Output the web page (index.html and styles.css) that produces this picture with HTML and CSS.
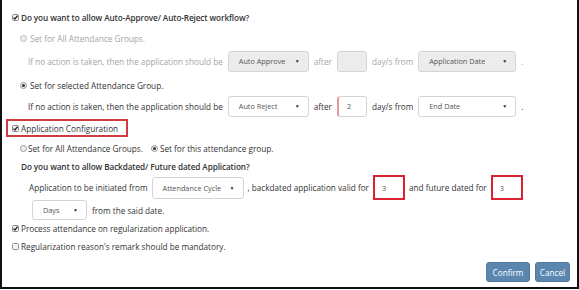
FILE: index.html
```html
<!DOCTYPE html>
<html lang="en">
<head>
  <meta charset="UTF-8" />
  <title>Regularization Settings</title>
  <link rel="stylesheet" href="styles.css">
</head>
<body>
  <div class="panel">

    <div class="row r1">
      <svg class="chk" viewBox="0 0 7 7" width="7" height="7"><rect x=".5" y=".5" width="6" height="6" rx="1" fill="#f2f2f2" stroke="#8c8c8c"/><path d="M1.5 3.6 L2.9 5 L5.6 1.6" fill="none" stroke="#222" stroke-width="1.3"/></svg>
      <span class="strong">Do you want to allow Auto-Approve/ Auto-Reject workflow?</span>
    </div>

    <div class="row r2 lvl1 muted">
      <svg class="radio" viewBox="0 0 7 7" width="7" height="7"><circle cx="3.5" cy="3.5" r="3" fill="#eee" stroke="#bbb"/></svg>
      <span>Set for All Attendance Groups.</span>
    </div>

    <div class="row r3 lvl2 muted line">
      <span>If no action is taken, then the application should be</span>
      <span class="select disabled w-rule"><span>Auto Approve</span><span class="arrow">▼</span></span>
      <span>after</span>
      <span class="num disabled"></span>
      <span>day/s from</span>
      <span class="select disabled w-from"><span>Application Date</span><span class="arrow">▼</span></span>
      <span>.</span>
    </div>

    <div class="row r4 lvl1">
      <svg class="radio" viewBox="0 0 7 7" width="7" height="7"><circle cx="3.5" cy="3.5" r="3" fill="#eee" stroke="#999"/><circle cx="3.5" cy="3.5" r="1.5" fill="#333"/></svg>
      <span>Set for selected Attendance Group.</span>
    </div>

    <div class="row r5 lvl2 line">
      <span>If no action is taken, then the application should be</span>
      <span class="select w-rule"><span>Auto Reject</span><span class="arrow">▼</span></span>
      <span>after</span>
      <span class="num invalid">2</span>
      <span>day/s from</span>
      <span class="select w-from"><span>End Date</span><span class="arrow">▼</span></span>
      <span>.</span>
    </div>

    <div class="row r6">
      <div class="mark">
        <svg class="chk" viewBox="0 0 7 7" width="7" height="7"><rect x=".5" y=".5" width="6" height="6" rx="1" fill="#f2f2f2" stroke="#8c8c8c"/><path d="M1.5 3.6 L2.9 5 L5.6 1.6" fill="none" stroke="#222" stroke-width="1.3"/></svg>
        <span>Application Configuration</span>
      </div>
    </div>

    <div class="row r7 lvl1">
      <svg class="radio" viewBox="0 0 7 7" width="7" height="7"><circle cx="3.5" cy="3.5" r="3" fill="#eee" stroke="#999"/></svg>
      <span>Set for All Attendance Groups.</span>
      <svg class="radio second" viewBox="0 0 7 7" width="7" height="7"><circle cx="3.5" cy="3.5" r="3" fill="#eee" stroke="#999"/><circle cx="3.5" cy="3.5" r="1.5" fill="#333"/></svg>
      <span>Set for this attendance group.</span>
    </div>

    <div class="row r8 lvl1">
      <span class="strong">Do you want to allow Backdated/ Future dated Application?</span>
    </div>

    <div class="row r9 lvl2b line">
      <span>Application to be initiated from</span>
      <span class="select w-cycle"><span>Attendance Cycle</span><span class="arrow">▼</span></span>
      <span>, backdated application valid for</span>
      <span class="num flagged">3</span>
      <span>and future dated for</span>
      <span class="num flagged">3</span>
    </div>

    <div class="row r10 line">
      <span class="select w-days"><span>Days</span><span class="arrow">▼</span></span>
      <span>from the said date.</span>
    </div>

    <div class="row r11">
      <svg class="chk" viewBox="0 0 7 7" width="7" height="7"><rect x=".5" y=".5" width="6" height="6" rx="1" fill="#f2f2f2" stroke="#8c8c8c"/><path d="M1.5 3.6 L2.9 5 L5.6 1.6" fill="none" stroke="#222" stroke-width="1.3"/></svg>
      <span>Process attendance on regularization application.</span>
    </div>

    <div class="row r12">
      <svg class="chk" viewBox="0 0 7 7" width="7" height="7"><rect x=".5" y=".5" width="6" height="6" rx="1" fill="#f2f2f2" stroke="#8c8c8c"/></svg>
      <span>Regularization reason's remark should be mandatory.</span>
    </div>

    <div class="actions">
      <button class="btn confirm">Confirm</button>
      <button class="btn cancel">Cancel</button>
    </div>

  </div>
</body>
</html>
```

FILE: styles.css
```css
body {
  margin: 0;
  font-family: "Open Sans", sans-serif;
  font-size: 8.2px;
  color: #333;
  background: #fff;
}
.panel {
  height: 289px;
  box-sizing: border-box;
  border: 2px solid #111;
  border-top: none;
  padding: 0 7px 0 10px;
  display: flex;
  flex-direction: column;
}
.row {
  display: flex;
  align-items: center;
  white-space: nowrap;
  height: 12px;
}
.line {
  gap: 5px;
}
.strong {
  font-weight: 600;
  letter-spacing: -0.1px;
}
.muted {
  color: #a5a5a5;
}
.chk {
  margin-right: 2px;
  flex: none;
}
.radio {
  margin-right: 3px;
  flex: none;
}
.radio.second {
  margin-left: 8px;
  margin-right: 2px;
}
.lvl1 {
  padding-left: 8px;
}
.lvl2 {
  padding-left: 16px;
}
.lvl2b {
  padding-left: 17px;
}

/* row spacing */
.r1 { margin-top: 11px; }
.r2 { margin-top: 9px; }
.r3 { margin-top: 6px; height: 22px; }
.r4 { margin-top: 7px; }
.r5 { margin-top: 4px; height: 22px; }
.r6 { margin-top: 2px; height: 18px; }
.r7 { margin-top: 5px; }
.r7 .radio:first-child { margin-right: 1px; }
.r8 { margin-top: 6px; padding-left: 9px; }
.r9 { margin-top: 3px; height: 25px; gap: 4px; }
.r10 { margin-top: 0; height: 20px; padding-left: 20px; }
.r11 { margin-top: 2px; }
.r12 { margin-top: 6px; }

.mark {
  display: flex;
  align-items: center;
  height: 18px;
  box-sizing: border-box;
  border: 2px solid #d13a3f;
  margin-left: -6px;
  padding: 0 8px 0 4px;
}

.select {
  display: flex;
  align-items: center;
  justify-content: space-between;
  box-sizing: border-box;
  height: 21px;
  padding: 0 8px 0 10px;
  border: 1px solid #d4d4d4;
  border-radius: 3px;
  background: #fff;
  color: #555;
  font-size: 7.3px;
}
.select.disabled {
  background: #ececec;
}
.arrow {
  font-size: 5px;
  color: #333;
}
.w-rule { width: 81px; }
.w-from { width: 98px; }
.w-cycle { width: 92px; height: 22px; }
.w-days { width: 55px; height: 20px; }

.num {
  box-sizing: border-box;
  width: 30px;
  height: 21px;
  border: 1px solid #d4d4d4;
  border-radius: 3px;
  background: #fff;
  color: #555;
  font-size: 7.3px;
  display: flex;
  align-items: center;
  padding-left: 8px;
}
.num.disabled {
  background: #ececec;
}
.num.invalid {
  border-left: 2px solid #e69a9a;
}
.num.flagged {
  width: 32px;
  height: 25px;
  border: 2.5px solid #d9232e;
  border-radius: 0;
  padding-left: 7px;
}

.actions {
  margin-top: auto;
  margin-bottom: 5px;
  display: flex;
  justify-content: flex-end;
  gap: 5px;
}
.btn {
  height: 20px;
  padding: 0;
  border: 1px solid #4f79a3;
  border-radius: 3px;
  background: #5b86b0;
  color: #fff;
  font-family: "Open Sans", sans-serif;
  font-size: 8.2px;
}
.confirm { width: 44px; }
.cancel { width: 35px; }
```
